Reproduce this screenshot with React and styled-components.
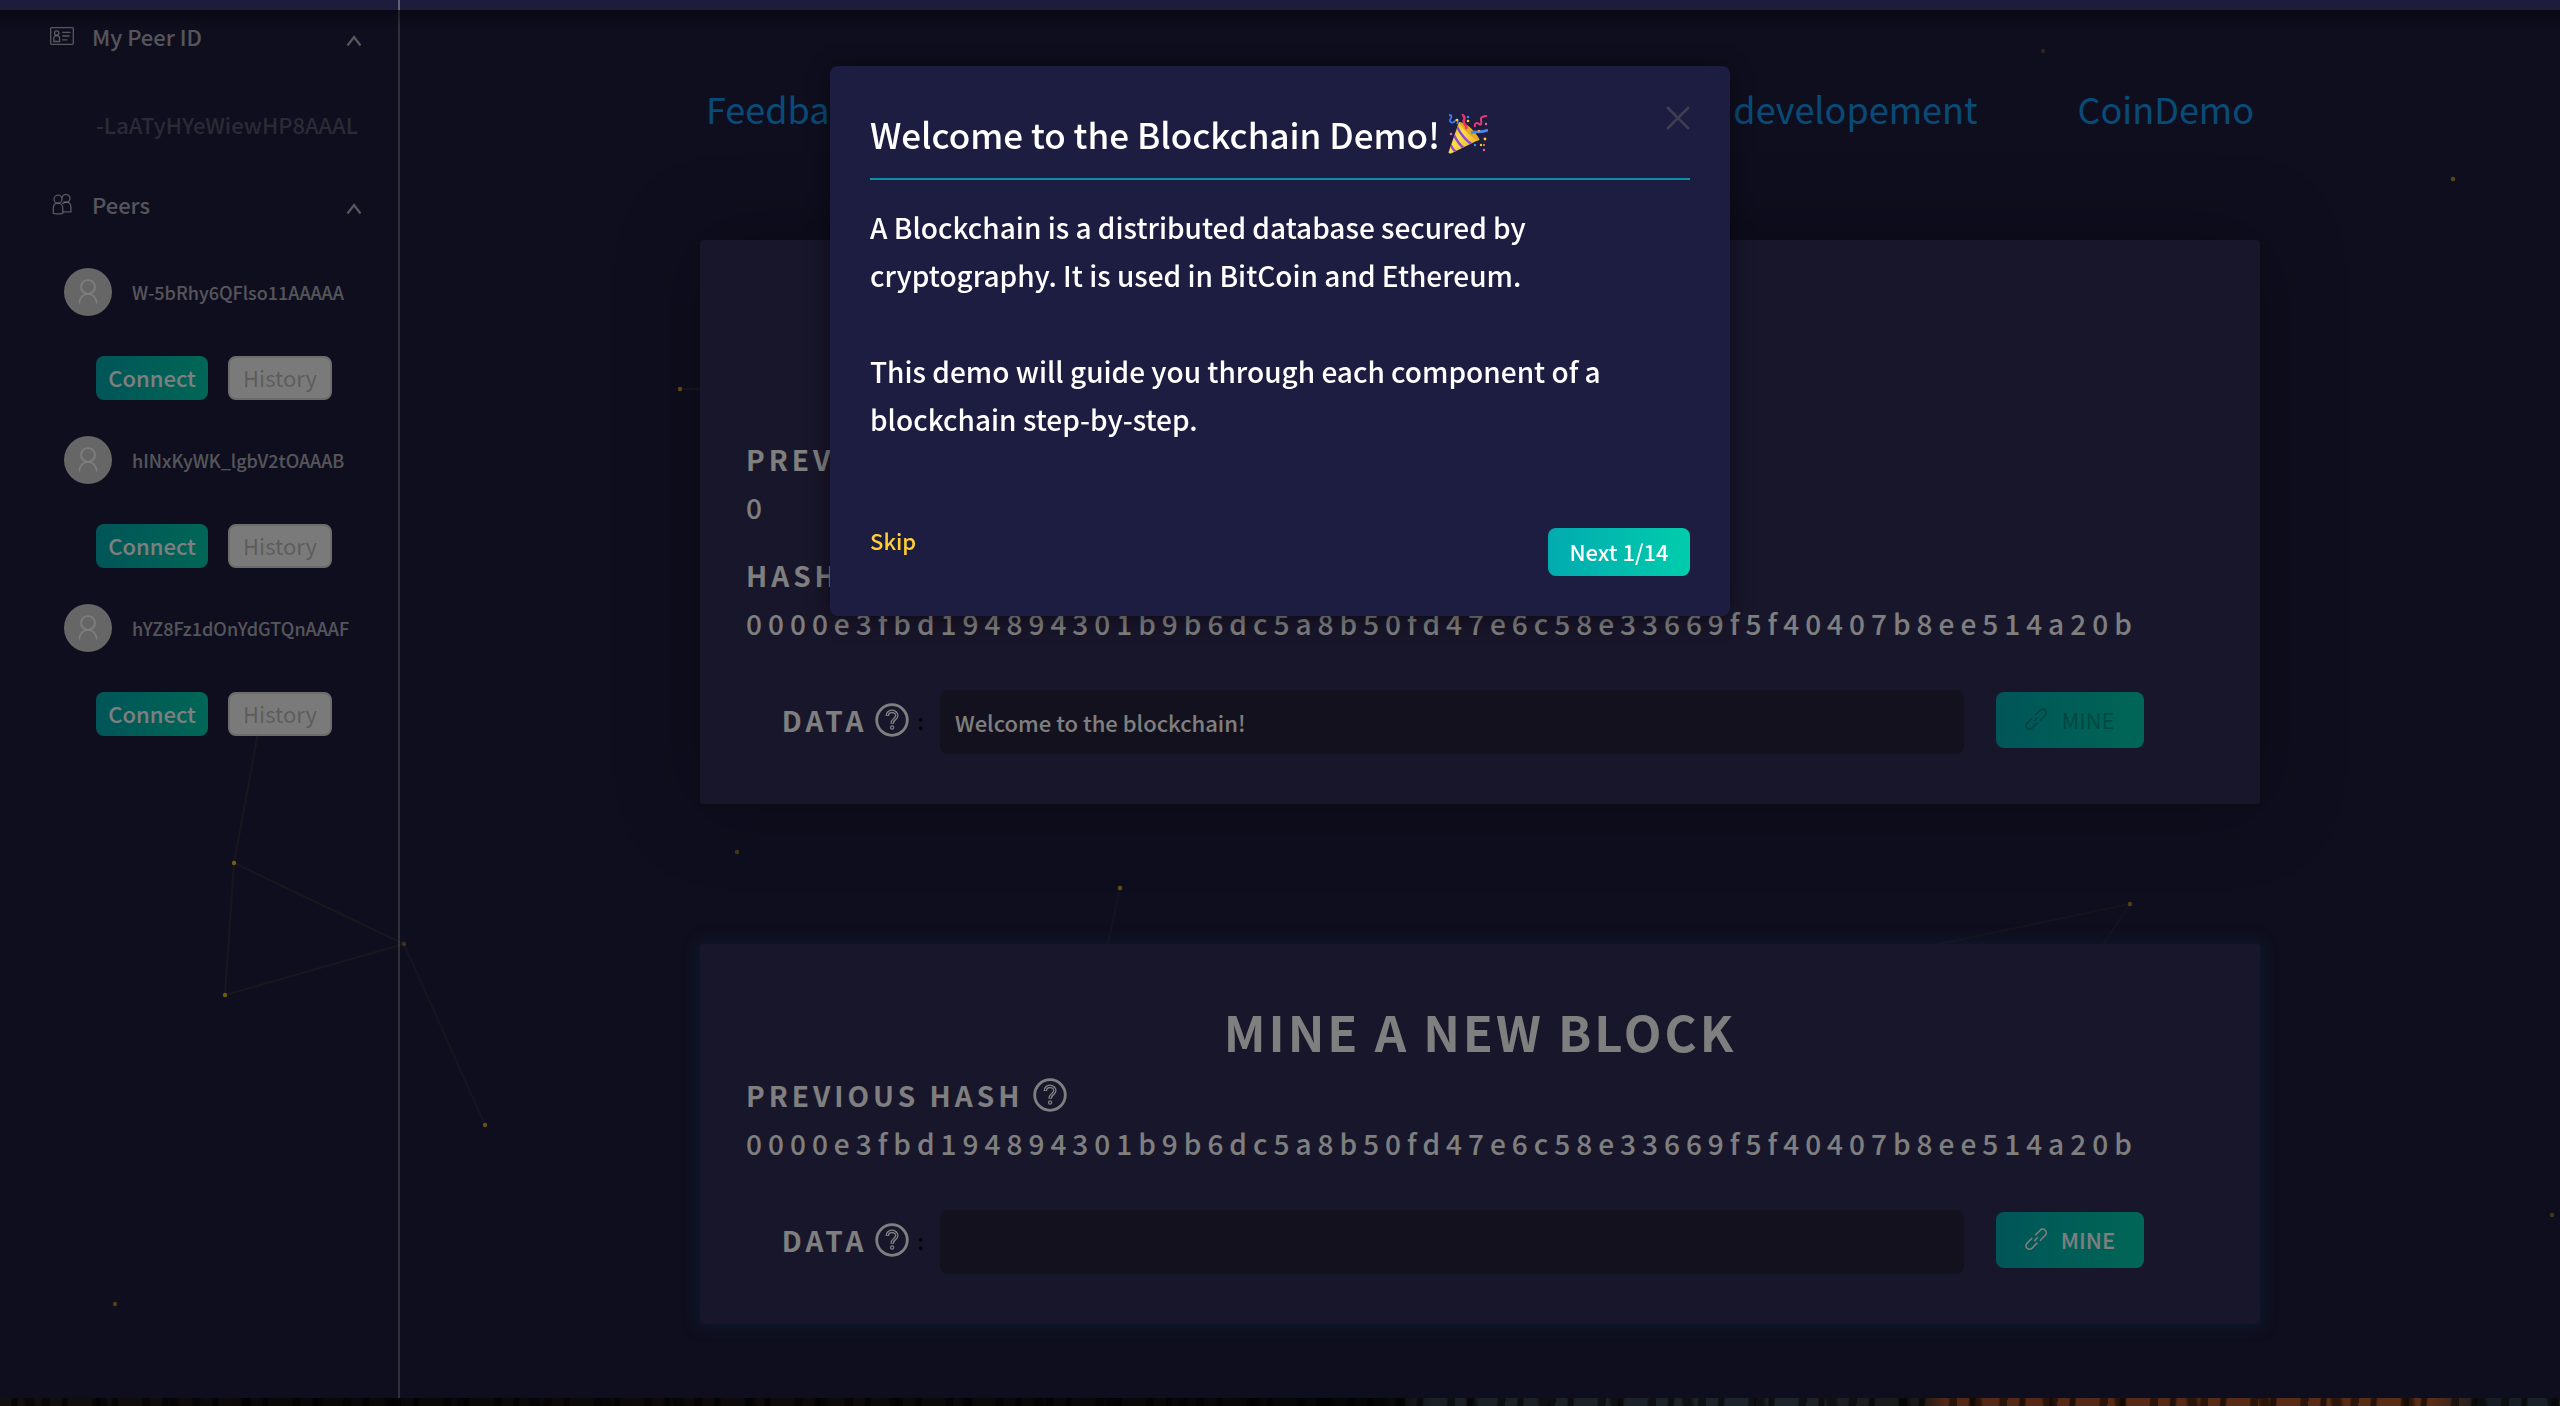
import React, { useState } from "react";
import styled, { createGlobalStyle } from "styled-components";

const HASH = "0000e3fbd194894301b9b6dc5a8b50fd47e6c58e33669f5f40407b8ee514a20b";

const peers = ["W-5bRhy6QFlso11AAAAA", "hINxKyWK_lgbV2tOAAAB", "hYZ8Fz1dOnYdGTQnAAAF"];

const dots = [
  { x: 234, y: 863, o: 0.9 },
  { x: 225, y: 995, o: 0.9 },
  { x: 404, y: 944, o: 0.4 },
  { x: 485, y: 1125, o: 0.8 },
  { x: 680, y: 389, o: 0.8 },
  { x: 2043, y: 51, o: 0.3 },
  { x: 2453, y: 179, o: 0.7 },
  { x: 737, y: 852, o: 0.5 },
  { x: 1120, y: 888, o: 0.8 },
  { x: 2130, y: 904, o: 0.6 },
  { x: 115, y: 1304, o: 0.6 },
  { x: 2552, y: 1215, o: 0.5 },
];

const links = [
  { d: "M264 700L234 863L225 995L404 944L234 863", o: 0.09 },
  { d: "M404 944L485 1125", o: 0.07 },
  { d: "M404 944L264 700", o: 0.02 },
  { d: "M680 389L760 388", o: 0.1 },
  { d: "M1120 888L1106 952", o: 0.05 },
  { d: "M2130 904L2098 952M2130 904L1920 948", o: 0.06 },
];

const Particles = () => (
  <Canvas viewBox="0 0 2560 1406" preserveAspectRatio="xMinYMin slice" aria-hidden="true">
    {links.map((link) => (
      <path key={link.d} d={link.d} fill="none" stroke="#ffcf33" strokeWidth="2" opacity={link.o} />
    ))}
    {dots.map((dot) => (
      <circle key={`${dot.x}-${dot.y}`} cx={dot.x} cy={dot.y} r="2.2" fill="#f5c518" opacity={dot.o} />
    ))}
  </Canvas>
);

const IdCardIcon = () => (
  <svg width="24" height="24" viewBox="0 0 24 24" fill="none" stroke="currentColor" strokeWidth="1.3">
    <rect x="0.7" y="3.7" width="22.6" height="16.6" rx="0.8" />
    <circle cx="6.7" cy="9" r="2.2" />
    <path d="M3.8 17.5v-2.9c0-2 1.3-3 2.9-3s2.9 1 2.9 3v2.9z" />
    <path d="M12.2 8.4h8.4M12.2 12h7.4M12.2 15.8h5.2" strokeWidth="1.3" />
  </svg>
);

const PeersIcon = () => (
  <svg width="24" height="24" viewBox="0 0 24 24" fill="none" stroke="currentColor" strokeWidth="1.3">
    <circle cx="8" cy="7.2" r="4" />
    <path d="M3.3 21.5v-5.3c0-3 2-5 4.7-5s4.7 2 4.7 5v5.3c0 .4-9.4.4-9.4 0z" />
    <path d="M12 6a4 4 0 1 1 1.5 3.5" />
    <path d="M12.4 12c.9-1.2 2.2-1.9 3.8-1.9 2.7 0 4.7 2 4.7 5v4.8h-8" />
  </svg>
);

const UserIcon = () => (
  <svg width="24" height="28" viewBox="0 0 24 28" fill="none" stroke="currentColor" strokeWidth="1.7">
    <circle cx="12" cy="9" r="7" />
    <path d="M3.3 25.5c.4-5.700 3.8-9.5 8.7-9.5s8.3 3.8 8.7 9.5" />
  </svg>
);

const LinkIcon = () => (
  <svg width="22" height="22" viewBox="0 0 22 22" fill="none" stroke="currentColor" strokeWidth="1.6">
    <path d="M10.2 7.2l5-5a3.5 3.5 0 0 1 5 5l-5.2 5.5" />
    <path d="M7.2 10L2 15.2a3.5 3.5 0 0 0 5 5l5.4-5.6" />
    <path d="M9.3 13l3.4-3.7" />
  </svg>
);

const QuestionIcon = () => (
  <svg width="34" height="34" viewBox="0 0 34 34" fill="none" stroke="currentColor">
    <circle cx="17" cy="17" r="15.3" strokeWidth="2.8" />
    <path d="M12.3 13c0-2.8 1.9-4.6 4.7-4.6s4.8 1.7 4.8 4.2c0 3.6-4.7 3.4-4.7 8.1" strokeWidth="3.6" />
    <path d="M12.3 12.2c.2-2.3 1.9-3.8 4.7-3.8s4.8 1.7 4.8 4.2c0 3.6-4.7 3.4-4.7 7.3" stroke="#312c55" strokeWidth="1" />
    <circle cx="17.1" cy="24.5" r="1.6" strokeWidth="1.2" />
  </svg>
);

const ChevronUp = () => (
  <Chevron width="16" height="12" viewBox="0 0 16 12" fill="none" stroke="currentColor" strokeWidth="2.2">
    <path d="M1.5 10.5L8 2l6.5 8.5" />
  </Chevron>
);

const CloseIcon = () => (
  <svg width="24" height="24" viewBox="0 0 24 24" fill="none" stroke="currentColor" strokeWidth="2.6">
    <path d="M1 1l22 22M23 1L1 23" />
  </svg>
);

const PartyPopper = () => (
  <svg width="40" height="40" viewBox="0 0 40 40" role="img" aria-label="Party popper">
    <defs>
      <linearGradient id="cone" x1="0" y1="0" x2="1" y2="0.7">
        <stop offset="0" stopColor="#c98a14" />
        <stop offset="0.45" stopColor="#fbe04a" />
        <stop offset="1" stopColor="#e0a21b" />
      </linearGradient>
      <clipPath id="coneClip">
        <path d="M11 8L0.5 38.5Q1 40 3 39.4L31.5 25.5Q24 12 11 8z" />
      </clipPath>
    </defs>
    <g clipPath="url(#coneClip)">
      <rect width="40" height="40" fill="url(#cone)" />
      <path d="M9 13Q16 26 25 31M5.5 20Q10 30 17 35M2 30Q5 36 9 39" stroke="#8d45d8" strokeWidth="2.4" fill="none" />
    </g>
    <path d="M11 8Q22 9 31.5 25.5Q30 28 27 25Q14 16 11 8z" fill="#e3ab22" />
    <path d="M18 15c2-4-4-5-2-9s-2-4-1-6" stroke="#e8326c" strokeWidth="2.6" fill="none" />
    <path d="M27 13c-1-4 2-5 4-3s3-1 2-4 3-4 6-4" stroke="#e23d74" strokeWidth="2" fill="none" />
    <path d="M23 19c5-3 8 1 17-3" stroke="#4b86ee" strokeWidth="2.8" fill="none" />
    <path d="M1 1c4 0 2 3 1 5s3 4 5 1 4 0 2 3" stroke="#3f7ae6" strokeWidth="1.8" fill="none" />
    <g fill="#ffca28">
      <circle cx="9" cy="6" r="1.3" />
      <circle cx="20" cy="7" r="1.3" />
      <circle cx="37" cy="25" r="1.4" />
      <circle cx="33" cy="31" r="1.2" />
    </g>
    <g fill="#ff8a3c">
      <circle cx="31" cy="17" r="1.3" />
      <circle cx="36" cy="31" r="1.1" />
    </g>
    <g fill="#3d8bff">
      <circle cx="20" cy="3" r="1.2" />
      <circle cx="27" cy="31" r="1.2" />
    </g>
    <g fill="#ef5f9a">
      <circle cx="3" cy="20" r="1.3" />
      <circle cx="36" cy="36" r="1.2" />
      <circle cx="38" cy="10" r="1.2" />
    </g>
  </svg>
);

const Peer = ({ name }) => (
  <PeerItem>
    <PeerInfo>
      <Avatar>
        <UserIcon />
      </Avatar>
      <PeerName>{name}</PeerName>
    </PeerInfo>
    <PeerActions>
      <ConnectButton type="button">Connect</ConnectButton>
      <HistoryButton type="button" disabled>
        History
      </HistoryButton>
    </PeerActions>
  </PeerItem>
);

const DataRow = ({ id, defaultValue, disabled }) => {
  const [data, setData] = useState(defaultValue);

  return (
    <DataForm onSubmit={(e) => e.preventDefault()}>
      <DataLabel htmlFor={id}>
        DATA <QuestionIcon />
        <Colon>:</Colon>
      </DataLabel>
      <DataInput id={id} type="text" value={data} onChange={(e) => setData(e.target.value)} />
      <MineButton type="submit" disabled={disabled}>
        <LinkIcon />
        MINE
      </MineButton>
    </DataForm>
  );
};

const App = () => {
  const [isTourOpen, setIsTourOpen] = useState(true);
  const [step, setStep] = useState(1);

  const closeTour = () => setIsTourOpen(false);

  return (
    <>
      <GlobalStyle />
      <Page>
        <Particles />
        <Layout>
          <Sidebar>
            <MenuTitle type="button">
              <IdCardIcon />
              <MenuText>My Peer ID</MenuText>
              <ChevronUp />
            </MenuTitle>
            <PeerId>-LaATyHYeWiewHP8AAAL</PeerId>
            <MenuTitle type="button">
              <PeersIcon />
              <MenuText>Peers</MenuText>
              <ChevronUp />
            </MenuTitle>
            <PeerList>
              {peers.map((peer) => (
                <Peer key={peer} name={peer} />
              ))}
            </PeerList>
          </Sidebar>
          <Content>
            <Nav>
              <NavLink href="#feedback">Feedback</NavLink>
              <NavLink href="#development">Learn developement</NavLink>
              <NavLink href="#coindemo">CoinDemo</NavLink>
            </Nav>
            <Block>
              <BlockTitle $genesis>GENESIS BLOCK</BlockTitle>
              <Field>
                <Label>
                  PREVIOUS HASH <QuestionIcon />
                </Label>
                <Value>0</Value>
              </Field>
              <Field>
                <Label>
                  HASH <QuestionIcon />
                </Label>
                <Value>{HASH}</Value>
              </Field>
              <DataRow id="genesis-data" defaultValue="Welcome to the blockchain!" disabled />
            </Block>
            <Block $active>
              <BlockTitle>MINE A NEW BLOCK</BlockTitle>
              <Field>
                <Label>
                  PREVIOUS HASH <QuestionIcon />
                </Label>
                <Value>{HASH}</Value>
              </Field>
              <DataRow id="new-data" defaultValue="" />
            </Block>
          </Content>
        </Layout>
        <Backdrop />
      </Page>

      {isTourOpen && (
        <>
          <Mask />
          <Modal role="dialog" aria-labelledby="tour-title">
            <ModalHeader>
              <ModalTitle id="tour-title">
                Welcome to the Blockchain Demo!
                <PartyPopper />
              </ModalTitle>
              <CloseButton type="button" aria-label="Close" onClick={closeTour}>
                <CloseIcon />
              </CloseButton>
            </ModalHeader>
            <ModalBody>
              A Blockchain is a distributed database secured by cryptography. It is used in BitCoin
              and Ethereum.
              <br />
              <br />
              This demo will guide you through each component of a blockchain step-by-step.
            </ModalBody>
            <ModalFooter>
              <SkipButton type="button" onClick={closeTour}>
                Skip
              </SkipButton>
              <NextButton type="button" onClick={() => setStep(Math.min(step + 1, 14))}>
                Next {step}/14
              </NextButton>
            </ModalFooter>
          </Modal>
        </>
      )}
    </>
  );
};

export default App;

// Styled Components
const GlobalStyle = createGlobalStyle`
  * {
    box-sizing: border-box;
  }

  body {
    margin: 0;
    background-color: #0a0908;
    font-family: "Noto Sans CJK SC", "Noto Sans", sans-serif;
    font-size: 22px;
    font-weight: 500;
  }

  button, input {
    font-family: inherit;
    font-size: inherit;
    font-weight: inherit;
  }

  svg {
    flex-shrink: 0;
  }
`;

const Page = styled.div`
  position: relative;
  display: flex;
  flex-direction: column;
  min-height: 100vh;
`;

const Canvas = styled.svg`
  position: absolute;
  inset: 0;
  width: 100%;
  height: 100%;
  pointer-events: none;
`;

const Layout = styled.div`
  flex: 1;
  display: flex;
  background-color: #1e1c3d;
`;

const Sidebar = styled.aside`
  width: 400px;
  flex-shrink: 0;
  padding-top: 6px;
  border-right: 2px solid rgba(255, 255, 255, 0.3);
  color: rgba(255, 255, 255, 0.65);
`;

const MenuTitle = styled.button`
  display: flex;
  align-items: center;
  gap: 18px;
  width: 100%;
  height: 60px;
  padding: 0 36px 0 50px;
  border: none;
  background: none;
  color: inherit;
  cursor: pointer;
`;

const MenuText = styled.span`
  flex: 1;
  text-align: left;
`;

const Chevron = styled.svg`
  margin-top: 10px;
`;

const PeerId = styled.div`
  margin-top: 8px;
  padding-left: 96px;
  line-height: 100px;
  color: rgba(255, 255, 255, 0.25);
`;

const PeerList = styled.ul`
  display: flex;
  flex-direction: column;
  gap: 36px;
  margin: 0;
  padding: 34px 0 0 64px;
  list-style: none;
`;

const PeerItem = styled.li`
  display: flex;
  flex-direction: column;
  gap: 40px;
`;

const PeerInfo = styled.div`
  display: flex;
  align-items: center;
  gap: 20px;
`;

const Avatar = styled.span`
  display: flex;
  align-items: center;
  justify-content: center;
  width: 48px;
  height: 48px;
  border-radius: 50%;
  background-color: #ccc;
  color: #fff;
`;

const PeerName = styled.span`
  font-size: 18px;
`;

const PeerActions = styled.div`
  display: flex;
  gap: 20px;
  padding-left: 32px;
`;

const Button = styled.button`
  display: flex;
  align-items: center;
  justify-content: center;
  padding: 0 0 2px;
  border: none;
  border-radius: 8px;
  background: linear-gradient(to right, #02aab0, #00cdac);
  color: #fff;
  cursor: pointer;

  &:disabled {
    color: rgba(0, 0, 0, 0.25);
    font-weight: 400;
    cursor: not-allowed;
  }
`;

const ConnectButton = styled(Button)`
  width: 112px;
  height: 44px;
`;

const HistoryButton = styled(Button)`
  width: 104px;
  height: 44px;
  border: 2px solid #d9d9d9;
  background: #f5f5f5;
`;

const MineButton = styled(Button)`
  gap: 14px;
  width: 148px;
  height: 56px;
  margin-bottom: 4px;
`;

const NextButton = styled(Button)`
  width: 142px;
  height: 48px;
`;

const Content = styled.main`
  flex: 1;
  display: flex;
  flex-direction: column;
  width: 100%;
  max-width: 1560px;
  margin: 0 auto;
  padding: 80px 0 74px;
`;

const Nav = styled.nav`
  display: flex;
  justify-content: flex-end;
  gap: 100px;
  margin-bottom: 104px;
  padding: 0 6px;
  font-size: 36px;
  font-weight: 400;
  line-height: 56px;
`;

const NavLink = styled.a`
  color: #1296ee;
  text-decoration: none;

  &:first-child {
    margin-right: auto;
  }
`;

const Block = styled.section`
  position: relative;
  padding: 47px 46px 50px;
  border-radius: 4px;
  background-color: #312c55;
  box-shadow: ${(props) =>
    props.$active ? "0 0 16px rgba(16, 92, 140, 0.5)" : "0 0 80px rgba(0, 0, 0, 0.35)"};
  color: #fff;

  & + & {
    margin-top: 140px;
  }
`;

const BlockTitle = styled.h1`
  margin: 0 0 ${(props) => (props.$genesis ? "68px" : "0")};
  font-size: 49px;
  font-weight: 700;
  line-height: 80px;
  letter-spacing: 3px;
  text-align: center;
`;

const Field = styled.div`
  font-size: 28px;
  line-height: 48px;

  & + & {
    margin-top: 20px;
  }
`;

const Label = styled.div`
  display: flex;
  align-items: center;
  gap: 10px;
  font-weight: 700;
  letter-spacing: 4px;
`;

const Value = styled.div`
  letter-spacing: 6px;
`;

const DataForm = styled.form`
  display: flex;
  align-items: center;
  margin-top: 43px;
  padding-right: 70px;
`;

const DataLabel = styled.label`
  display: flex;
  align-items: center;
  justify-content: flex-end;
  gap: 8px;
  width: 194px;
  padding: 0 16px 4px 0;
  font-size: 28px;
  font-weight: 700;
  letter-spacing: 4px;
`;

const Colon = styled.span`
  color: #000;
  font-size: 22px;
  font-weight: 500;
  letter-spacing: 0;
`;

const DataInput = styled.input`
  flex: 1;
  min-width: 0;
  height: 64px;
  margin-right: 32px;
  padding: 0 15px;
  border: none;
  border-radius: 8px;
  background-color: #24223a;
  color: #fff;
`;

// strip of wallpaper left visible under the window
const Backdrop = styled.footer`
  height: 8px;
  background:
    repeating-linear-gradient(95deg, transparent 0 11px, rgba(0, 0, 0, 0.6) 13px 17px, transparent 19px 41px, rgba(0, 0, 0, 0.5) 43px 50px),
    repeating-linear-gradient(80deg, transparent 0 23px, rgba(0, 0, 0, 0.5) 26px 33px, transparent 37px 71px),
    linear-gradient(to right, #2a211f, #14100f 12%, #1c1614 30%, #0e0d0d 54%, #36414d 56%, #3c4856 70%, #33302f 75%, #a8512a 76%, #b45a2e 95%, #2c3947 97%, #364452);
`;

const Mask = styled.div`
  position: fixed;
  inset: 10px 0 0;
  background:
    linear-gradient(rgba(0, 0, 0, 0.35), transparent 18px),
    rgba(0, 0, 0, 0.5);
`;

const Modal = styled.div`
  position: fixed;
  top: 66px;
  left: 50%;
  width: 900px;
  margin-left: -450px;
  padding: 40px;
  border-radius: 8px;
  background-color: #1d1d41;
  box-shadow: 0 2px 24px rgba(0, 0, 0, 0.5);
  color: #fff;
`;

const ModalHeader = styled.header`
  display: flex;
  justify-content: space-between;
  align-items: flex-start;
  padding-bottom: 16px;
  border-bottom: 2px solid #0e8fa6;
`;

const ModalTitle = styled.h2`
  display: flex;
  align-items: center;
  gap: 8px;
  margin: 0;
  font-size: 35px;
  font-weight: 500;
  line-height: 56px;
`;

const CloseButton = styled.button`
  display: flex;
  padding: 0;
  border: none;
  background: none;
  color: #3e3d52;
  cursor: pointer;
`;

const ModalBody = styled.p`
  margin: 23px 0 85px;
  font-size: 28px;
  line-height: 48px;
`;

const ModalFooter = styled.footer`
  display: flex;
  justify-content: space-between;
  align-items: flex-start;
`;

const SkipButton = styled.button`
  padding: 0;
  border: none;
  background: none;
  color: #ffcf33;
  line-height: 24px;
  cursor: pointer;
`;
